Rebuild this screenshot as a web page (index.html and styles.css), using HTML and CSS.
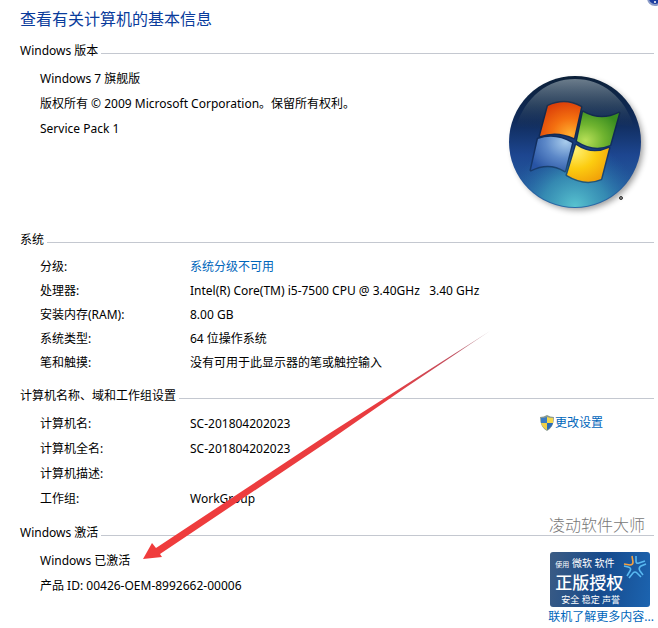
FILE: index.html
```
<!DOCTYPE html>
<html lang="zh-CN">
<head>
    <meta charset="UTF-8">
    <meta name="viewport" content="width=device-width, initial-scale=1.0">
    <link rel="stylesheet" href="styles.css">
    <title>系统</title>
</head>
<body>
    <main class="page">
        <button class="help" aria-label="帮助">
            <svg width="16" height="16" viewBox="0 0 16 16" aria-hidden="true">
                <circle cx="8" cy="8" r="7" fill="#1c3ca0" stroke="#8c9cc8" stroke-width="2"/>
                <path d="M6 6Q6 4 8 4T10 6Q10 8 8 8V10" fill="none" stroke="#fff" stroke-width="1"/>
                <circle cx="8" cy="12" r="1" fill="#fff"/>
            </svg>
        </button>
        <h1 class="title">查看有关计算机的基本信息</h1>

        <section>
            <h2 class="heading">Windows 版本</h2>
            <div class="content">
                <div class="info">
                    <p>Windows 7 旗舰版</p>
                    <p>版权所有 © 2009 Microsoft Corporation。保留所有权利。</p>
                    <p>Service Pack 1</p>
                </div>
                <svg class="logo" width="154" height="152" viewBox="0 0 154 152" role="img" aria-label="Windows">
                    <defs>
                        <linearGradient id="orb" x1="0" y1="0" x2="0" y2="1">
                            <stop offset="0" stop-color="#0c2038"/>
                            <stop offset=".35" stop-color="#102c5c"/>
                            <stop offset=".6" stop-color="#1d4690"/>
                            <stop offset="1" stop-color="#2a6ca8"/>
                        </linearGradient>
                        <radialGradient id="glow" cx=".5" cy="1" r=".5">
                            <stop offset="0" stop-color="#59c4d0"/>
                            <stop offset=".5" stop-color="#3a98b8" stop-opacity=".75"/>
                            <stop offset="1" stop-color="#2468a8" stop-opacity="0"/>
                        </radialGradient>
                        <linearGradient id="gloss" x1="0" y1="0" x2="0" y2="1">
                            <stop offset="0" stop-color="#8494a0" stop-opacity=".8"/>
                            <stop offset=".5" stop-color="#40566c" stop-opacity=".6"/>
                            <stop offset="1" stop-color="#18305a" stop-opacity="0"/>
                        </linearGradient>
                        <radialGradient id="red" cx=".75" cy=".9" r="1">
                            <stop offset="0" stop-color="#ffb030"/>
                            <stop offset=".45" stop-color="#f47010"/>
                            <stop offset="1" stop-color="#d83808"/>
                        </radialGradient>
                        <radialGradient id="green" cx=".2" cy=".8" r=".9">
                            <stop offset="0" stop-color="#b8e058"/>
                            <stop offset=".5" stop-color="#70b430"/>
                            <stop offset="1" stop-color="#388c20"/>
                        </radialGradient>
                        <radialGradient id="blue" cx=".85" cy=".15" r="1">
                            <stop offset="0" stop-color="#a8ccec"/>
                            <stop offset=".5" stop-color="#5c88c8"/>
                            <stop offset="1" stop-color="#2854a4"/>
                        </radialGradient>
                        <radialGradient id="yellow" cx=".2" cy=".15" r="1">
                            <stop offset="0" stop-color="#fff070"/>
                            <stop offset=".5" stop-color="#fccc10"/>
                            <stop offset="1" stop-color="#f09c08"/>
                        </radialGradient>
                        <filter id="soft" x="-20%" y="-20%" width="140%" height="140%">
                            <feGaussianBlur stdDeviation="3"/>
                        </filter>
                    </defs>
                    <circle cx="78" cy="79" r="65" fill="#000" opacity=".4" filter="url(#soft)"/>
                    <circle cx="75" cy="76" r="66" fill="url(#orb)"/>
                    <circle cx="75" cy="76" r="65" fill="url(#glow)"/>
                    <path d="M16 61C25 31 48 13 75 13s50 18 59 48C112 56 98 62 75 65S35 60 16 61Z" fill="url(#gloss)"/>
                    <g stroke="#0c2040" stroke-width="3" stroke-linejoin="round" opacity=".5">
                        <path d="M48 40Q65 32 81 41L74 72Q57 64 40 70Z"/>
                        <path d="M83 46Q101 56 119 47L110 79Q94 86 77 75Z"/>
                        <path d="M38 73Q55 67 72 77L65 105Q49 95 31 104Z"/>
                        <path d="M76 79Q92 90 109 82L101 113Q85 120 67 109Z"/>
                    </g>
                    <path d="M48 40Q65 32 81 41L74 72Q57 64 40 70Z" fill="url(#red)"/>
                    <path d="M83 46Q101 56 119 47L110 79Q94 86 77 75Z" fill="url(#green)"/>
                    <path d="M38 73Q55 67 72 77L65 105Q49 95 31 104Z" fill="url(#blue)"/>
                    <path d="M76 79Q92 90 109 82L101 113Q85 120 67 109Z" fill="url(#yellow)"/>
                    <circle cx="121" cy="132" r="1.5" fill="#888" stroke="#333"/>
                </svg>
            </div>
        </section>

        <section>
            <h2 class="heading">系统</h2>
            <div class="content specs">
                <table class="details compact">
                    <tr><th scope="row">分级:</th><td><a href="#">系统分级不可用</a></td></tr>
                    <tr><th scope="row">处理器:</th><td>Intel(R) Core(TM) i5-7500 CPU @ 3.40GHz &nbsp; 3.40 GHz</td></tr>
                    <tr><th scope="row">安装内存(RAM):</th><td>8.00 GB</td></tr>
                    <tr><th scope="row">系统类型:</th><td>64 位操作系统</td></tr>
                    <tr><th scope="row">笔和触摸:</th><td>没有可用于此显示器的笔或触控输入</td></tr>
                </table>
            </div>
        </section>

        <section>
            <h2 class="heading">计算机名称、域和工作组设置</h2>
            <div class="content">
                <table class="details">
                    <tr><th scope="row">计算机名:</th><td>SC-201804202023</td></tr>
                    <tr><th scope="row">计算机全名:</th><td>SC-201804202023</td></tr>
                    <tr><th scope="row">计算机描述:</th><td></td></tr>
                    <tr><th scope="row">工作组:</th><td>WorkGroup</td></tr>
                </table>
                <a class="change" href="#">
                    <svg width="14" height="16" viewBox="0 0 14 16" aria-hidden="true">
                        <path d="M7 0Q10 2 14 2Q14 12 7 16Q0 12 0 2Q4 2 7 0Z" fill="#8a9a90"/>
                        <path d="M7 2V8H1Q1 6 1 3Q5 3 7 2Z" fill="#3a7cc4"/>
                        <path d="M7 2Q9 3 13 3Q13 6 13 8H7Z" fill="#f4d84c"/>
                        <path d="M1 8H7V15Q2 12 1 8Z" fill="#f0d048"/>
                        <path d="M7 8H13Q12 12 7 15Z" fill="#2c6cb8"/>
                    </svg>更改设置</a>
            </div>
        </section>

        <section class="activation">
            <h2 class="heading">Windows 激活</h2>
            <span class="mark">凌动软件大师</span>
            <div class="content">
                <div class="info">
                    <p>Windows 已激活</p>
                    <p>产品 ID: 00426-OEM-8992662-00006</p>
                </div>
                <div class="genuine">
                    <div class="badge">
                        <span class="badge-top"><small>使用</small> 微软 软件</span>
                        <strong>正版授权</strong>
                        <span class="badge-foot">安全 稳定 声誉</span>
                        <svg class="star" width="26" height="26" viewBox="0 0 26 26" fill="none" stroke-width="1.6" aria-hidden="true">
                            <path d="M2 10L8 11Q11 11 11 8L10 2" stroke="#f4a040"/>
                            <path d="M14 2L14 7Q14 10 17 9L23 7M24 10L19 12Q16 14 18 17L21 21M19 23L15 19Q13 17 11 19L7 24M5 22L8 17Q10 14 6 13L2 12" stroke="#58b8f0"/>
                        </svg>
                    </div>
                    <a href="#">联机了解更多内容...</a>
                </div>
            </div>
        </section>

        <!-- red pointer to the activation state -->
        <svg class="arrow" width="348" height="229" viewBox="0 0 348 229" aria-hidden="true">
            <defs>
                <linearGradient id="tail" x1="0" y1="1" x2="1" y2="0">
                    <stop offset="0" stop-color="#f03c3c"/>
                    <stop offset=".7" stop-color="#e83c40"/>
                    <stop offset=".9" stop-color="#c05060"/>
                    <stop offset="1" stop-color="#b09098" stop-opacity=".7"/>
                </linearGradient>
            </defs>
            <path d="M0 228L9 212L13 217L187 102L347 0L262 57L187 109L17 223L19 226Z" fill="url(#tail)"/>
        </svg>
    </main>
</body>
</html>
```
FILE: styles.css
```
*{
    box-sizing: border-box;
}
body{
    margin: 0;
    background-color: white;
    color: black;
    font-family: "Noto Sans", "Noto Sans CJK SC", sans-serif;
    font-size: 12px;
}
a{
    color: #0066bb;
    text-decoration: none;
}
p, h1, h2{
    margin: 0;
    font-weight: normal;
}
.page{
    position: relative;
    overflow: hidden;
    padding: 7px 4px 0 20px;
}
.title{
    margin-bottom: 8px;
    line-height: 24px;
    font-size: 16px;
    color: #0a3c9c;
}
.help{
    position: absolute;
    top: -10px;
    right: -5px;
    padding: 0;
    border: none;
    background: none;
    line-height: 0;
}
.heading{
    display: flex;
    align-items: center;
    gap: 3px;
    margin-bottom: 3px;
    font-size: 12px;
    line-height: 24px;
}
/* rule that fills the rest of the heading row */
.heading::after{
    content: "";
    flex: 1;
    height: 1px;
    margin-top: 5px;
    background-color: #c4c8d0;
}
.content{
    display: flex;
    justify-content: space-between;
    align-items: flex-start;
    padding-left: 20px;
    margin-bottom: 10px;
}
.specs{
    margin-bottom: 9px;
}
.info p{
    line-height: 25px;
}
.logo{
    display: block;
}
.details{
    border-collapse: collapse;
}
.details th, .details td{
    height: 25px;
    padding: 0;
    line-height: 24px;
    font-weight: normal;
    text-align: left;
}
.details th{
    width: 150px;
}
.compact th, .compact td{
    height: 24px;
}
.change{
    display: flex;
    align-items: center;
    gap: 1px;
    margin-right: 51px;
    line-height: 24px;
}
.activation{
    position: relative;
}
.activation .content{
    margin-bottom: 0;
}
.mark{
    position: absolute;
    top: -8px;
    right: 9px;
    font-size: 16px;
    line-height: 24px;
    font-weight: 300;
    color: #777;
}
.genuine{
    padding-top: 4px;
    line-height: 20px;
}
.badge{
    position: relative;
    display: flex;
    flex-direction: column;
    width: 100px;
    height: 55px;
    margin-left: 2px;
    padding: 3px 5px;
    border-radius: 3px;
    background: linear-gradient(100deg, #3c5c84, #164a8c 50%, #1c64b0);
    color: white;
    white-space: nowrap;
}
.badge-top{
    font-size: 10px;
    line-height: 16px;
}
.badge small{
    font-size: 7px;
}
.badge strong{
    font-size: 17px;
    line-height: 20px;
    font-weight: 500;
}
.badge-foot{
    padding-left: 6px;
    font-size: 9px;
    line-height: 14px;
}
.star{
    position: absolute;
    top: 2px;
    right: 2px;
}
.arrow{
    position: absolute;
    top: 331px;
    left: 143px;
    pointer-events: none;
}
```
